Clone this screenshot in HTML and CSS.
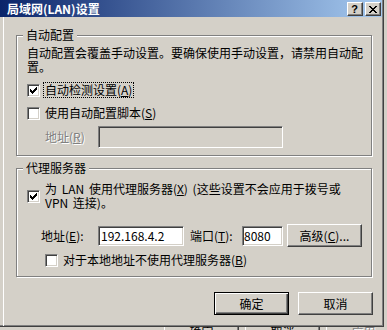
FILE: index.html
```html
<!DOCTYPE html>
<html lang="zh-CN">

<head>
    <meta charset="UTF-8">
    <meta name="viewport" content="width=device-width, initial-scale=1.0">
    <title>局域网(LAN)设置</title>
    <link rel="stylesheet" href="styles.css">
</head>

<body>
    <div class="window">
        <div class="title-bar">
            <span class="title">局域网(LAN)设置</span>
            <div class="caption-btns">
                <button class="cap-btn help">?</button>
                <button class="cap-btn close">
                    <svg width="8" height="7" viewBox="0 0 8 7" shape-rendering="crispEdges">
                        <path d="M0 0h2v1H0zM6 0h2v1H6zM1 1h2v1H1zM5 1h2v1H5zM2 2h4v1H2zM3 3h2v1H3zM2 4h4v1H2zM1 5h2v1H1zM5 5h2v1H5zM0 6h2v1H0zM6 6h2v1H6z" />
                    </svg>
                </button>
            </div>
        </div>

        <div class="client">
            <!-- 自动配置 -->
            <div class="group group-auto">
                <span class="legend">自动配置</span>
                <p class="desc">自动配置会覆盖手动设置。要确保使用手动设置，请禁用自动配<br>置。</p>
                <div class="row row-detect">
                    <span class="check">
                        <svg width="7" height="7" viewBox="0 0 7 7" shape-rendering="crispEdges">
                            <path d="M6 0h1v1H6zM5 1h2v1H5zM0 2h1v1H0zM4 2h3v1H4zM0 3h2v1H0zM3 3h3v1H3zM0 4h5v1H0zM1 5h3v1H1zM2 6h1v1H2z" />
                        </svg>
                    </span>
                    <span class="label focus">自动检测设置(<u>A</u>)</span>
                </div>
                <div class="row row-script">
                    <span class="check"></span>
                    <span class="label">使用自动配置脚本(<u>S</u>)</span>
                </div>
                <div class="row row-url">
                    <span class="field-label url-label disabled">地址(<u>R</u>)</span>
                    <input class="edit edit-url" type="text" disabled>
                </div>
            </div>

            <!-- 代理服务器 -->
            <div class="group group-proxy">
                <span class="legend">代理服务器</span>
                <div class="row row-proxy">
                    <span class="check">
                        <svg width="7" height="7" viewBox="0 0 7 7" shape-rendering="crispEdges">
                            <path d="M6 0h1v1H6zM5 1h2v1H5zM0 2h1v1H0zM4 2h3v1H4zM0 3h2v1H0zM3 3h3v1H3zM0 4h5v1H0zM1 5h3v1H1zM2 6h1v1H2z" />
                        </svg>
                    </span>
                    <span class="label proxy-label">为 LAN 使用代理服务器(<u>X</u>) (这些设置不会应用于拨号或<br>VPN 连接)。</span>
                </div>
                <div class="row row-addr">
                    <span class="field-label addr-label">地址(<u>E</u>):</span>
                    <input class="edit edit-addr" type="text" value="192.168.4.2">
                    <span class="field-label port-label">端口(<u>T</u>):</span>
                    <input class="edit edit-port" type="text" value="8080">
                    <button class="btn btn-adv">高级(<u>C</u>)...</button>
                </div>
                <div class="row row-bypass">
                    <span class="check"></span>
                    <span class="label">对于本地地址不使用代理服务器(<u>B</u>)</span>
                </div>
            </div>

            <div class="actions">
                <button class="btn btn-default">确定</button>
                <button class="btn">取消</button>
            </div>
        </div>
    </div>

    <!-- 后面窗口露出的按钮 -->
    <div class="behind">
        <span class="btn behind-btn">确定</span>
        <span class="btn behind-btn">取消</span>
        <span class="btn behind-btn disabled">应用</span>
    </div>
</body>

</html>
```

FILE: styles.css
```css
* {
    box-sizing: border-box;
    margin: 0;
}

html,
body {
    width: 387px;
    height: 330px;
    overflow: hidden;
}

body {
    background-color: #d4d0c8;
    font-family: "Noto Sans CJK SC", sans-serif;
    font-size: 12px;
    line-height: 14px;
    color: #000;
}

.window {
    width: 384px;
    height: 327px;
    background-color: #d4d0c8;
    border-right: 1px solid #404040;
    border-bottom: 1px solid #404040;
    box-shadow: inset -1px -1px #808080;
}

.title-bar {
    display: flex;
    align-items: center;
    justify-content: space-between;
    width: 382px;
    height: 17px;
    padding: 0 1px 0 7px;
    background: linear-gradient(to right, #0a246a, #a6caf0);
}

.title {
    color: #fff;
    font-weight: bold;
    font-size: 12px;
    line-height: 14px;
}

.caption-btns {
    display: flex;
    gap: 2px;
    margin-top: 1px;
}

.cap-btn {
    display: flex;
    align-items: center;
    justify-content: center;
    width: 16px;
    height: 14px;
    padding: 0;
    background-color: #d4d0c8;
    border: 1px solid;
    border-color: #fff #404040 #404040 #fff;
    box-shadow: inset -1px -1px #808080;
}

.help {
    font-family: "Liberation Sans", sans-serif;
    font-weight: bold;
    font-size: 11px;
    line-height: 11px;
    color: #000;
    padding-right: 1px;
}

.close svg {
    display: block;
    fill: #000;
}

.client {
    height: 309px;
    margin-left: 3px;
    border-left: 1px solid #fff;
    padding: 18px 0 0 12px;
}

.group {
    position: relative;
    width: 356px;
    border: 1px solid #808080;
    box-shadow: inset 1px 1px #fff, 1px 1px #fff;
    padding: 10px 0 0 10px;
}

.group-auto {
    height: 121px;
}

.group-proxy {
    height: 109px;
    margin-top: 12px;
    padding-top: 12px;
}

.legend {
    position: absolute;
    top: -8px;
    left: 6px;
    padding: 0 3px;
    background-color: #d4d0c8;
}

.row {
    display: flex;
    align-items: center;
}

.check {
    flex: none;
    width: 13px;
    height: 13px;
    padding: 2px;
    margin-right: 3px;
    background-color: #fff;
    border: 1px solid;
    border-color: #808080 #fff #fff #808080;
    box-shadow: inset 1px 1px #404040, inset -1px -1px #d4d0c8;
}

.check svg {
    display: block;
    fill: #000;
}

.label {
    border: 1px solid transparent;
    padding: 0 1px;
}

.focus {
    border: 1px dotted #000;
}

.proxy-label {
    word-spacing: 2px;
}

.row-detect {
    margin-top: 8px;
}

.row-script {
    margin-top: 7px;
}

.row-url {
    margin-top: 5px;
    padding-left: 18px;
}

.url-label {
    width: 53px;
}

.disabled {
    color: #808080;
    text-shadow: 1px 1px 0 #fff;
}

.edit {
    height: 20px;
    padding: 0 2px;
    font-family: "Noto Sans CJK SC", sans-serif;
    font-size: 12px;
    color: #000;
    background-color: #fff;
    border: 1px solid;
    border-color: #808080 #fff #fff #808080;
    box-shadow: inset 1px 1px #404040, inset -1px -1px #d4d0c8;
    outline: none;
}

.edit:disabled {
    height: 22px;
    background-color: #d4d0c8;
}

.edit-url {
    width: 185px;
}

.row-addr {
    margin-top: 13px;
    padding-left: 14px;
}

.addr-label {
    width: 57px;
}

.edit-addr {
    width: 86px;
}

.port-label {
    width: 52px;
    margin-left: 6px;
}

.edit-port {
    width: 41px;
    padding: 0 1px;
}

.row-bypass {
    margin-top: 5px;
    padding-left: 18px;
}

.btn {
    width: 75px;
    height: 23px;
    padding: 0;
    font-family: "Noto Sans CJK SC", sans-serif;
    font-size: 12px;
    color: #000;
    background-color: #d4d0c8;
    border: 1px solid;
    border-color: #fff #404040 #404040 #fff;
    box-shadow: inset -1px -1px #808080;
}

.btn-adv {
    margin-left: 4px;
}

.btn-default {
    border-color: #000;
    box-shadow: inset 1px 1px #fff, inset -1px -1px #404040, inset -2px -2px #808080;
}

.actions {
    display: flex;
    justify-content: flex-end;
    gap: 9px;
    width: 357px;
    margin-top: 15px;
}

.behind {
    display: flex;
    gap: 6px;
    height: 3px;
    padding-left: 164px;
    overflow: hidden;
}

.behind-btn {
    flex: none;
    display: flex;
    align-items: center;
    justify-content: center;
    margin-top: -7px;
}

.behind-btn.disabled {
    color: #808080;
}
```
